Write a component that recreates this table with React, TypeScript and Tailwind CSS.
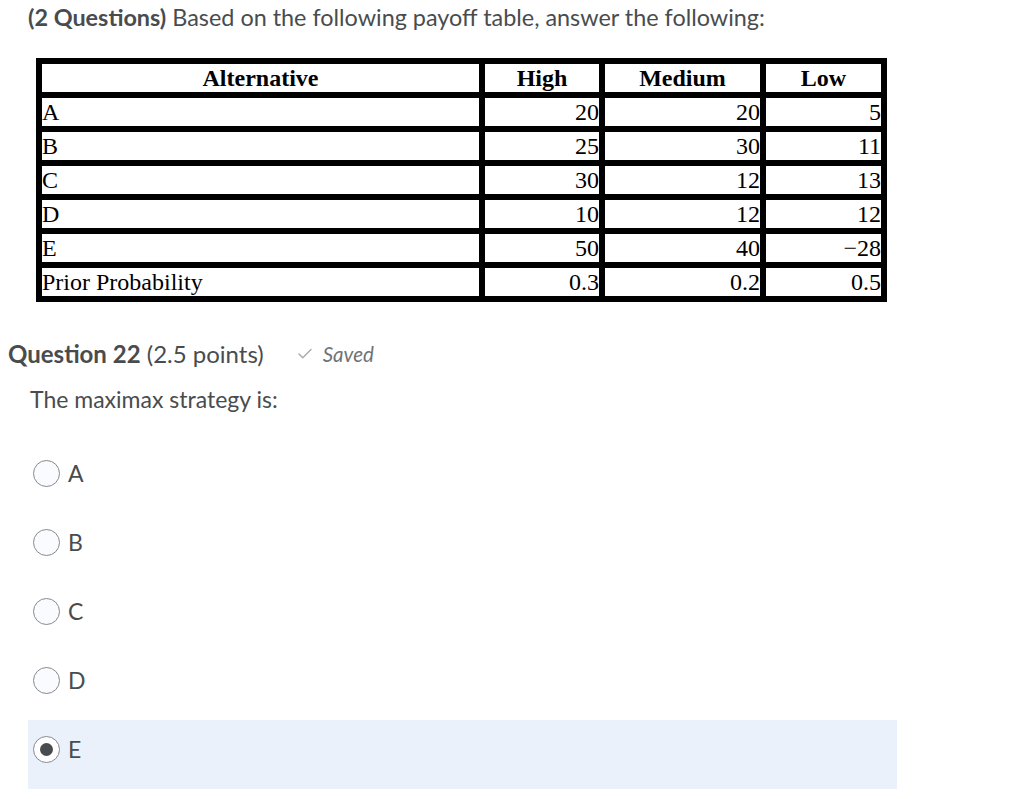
import React from 'react';
import { Check } from 'lucide-react';

const rows = [
  { label: 'A', high: '20', medium: '20', low: '5' },
  { label: 'B', high: '25', medium: '30', low: '11' },
  { label: 'C', high: '30', medium: '12', low: '13' },
  { label: 'D', high: '10', medium: '12', low: '12' },
  { label: 'E', high: '50', medium: '40', low: '\u221228' },
  { label: 'Prior Probability', high: '0.3', medium: '0.2', low: '0.5' },
];

const options = ['A', 'B', 'C', 'D', 'E'];

export default function App() {
  const selected = 'E';

  return (
    <div className="min-h-screen bg-white text-[#494c4e] font-['Lato',sans-serif]">
      {/* Intro */}
      <p className="pl-[28px] pt-[3px] text-[23.4px] leading-[28px]">
        <span className="font-bold">(2 Questions)</span> Based on the following payoff table, answer the following:
      </p>

      {/* Payoff table */}
      <table className="ml-[36px] mt-[27px] border-separate border-spacing-[6px] bg-black font-['Liberation_Serif',serif] text-[24px] leading-[27px] text-black">
        <thead>
          <tr>
            <th className="w-[437px] h-[28px] p-0 bg-white font-bold text-center align-bottom">Alternative</th>
            <th className="w-[114px] h-[28px] p-0 bg-white font-bold text-center align-bottom">High</th>
            <th className="w-[155px] h-[28px] p-0 bg-white font-bold text-center align-bottom">Medium</th>
            <th className="w-[115px] h-[28px] p-0 bg-white font-bold text-center align-bottom">Low</th>
          </tr>
        </thead>
        <tbody>
          {rows.map((r) => (
            <tr key={r.label}>
              <td className="h-[28px] p-0 bg-white text-left align-bottom">{r.label}</td>
              <td className="h-[28px] p-0 bg-white text-right align-bottom">{r.high}</td>
              <td className="h-[28px] p-0 bg-white text-right align-bottom">{r.medium}</td>
              <td className="h-[28px] p-0 bg-white text-right align-bottom">{r.low}</td>
            </tr>
          ))}
        </tbody>
      </table>

      {/* Question header */}
      <div className="mt-[38px] pl-[8px] flex items-center h-[28px]">
        <span className="text-[24px] leading-[28px]">
          <span className="font-bold">Question 22</span> (2.5 points)
        </span>
        <span className="ml-[32px] flex items-center gap-[9px] text-[#6e7376]">
          <Check size={18} strokeWidth={2} className="text-[#a8adb0]" />
          <span className="italic text-[20.5px]">Saved</span>
        </span>
      </div>

      <p className="mt-[17px] pl-[30px] text-[23px] leading-[28px]">The maximax strategy is:</p>

      {/* Options */}
      <div className="mt-[31px] flex flex-col">
        {options.map((o) => {
          const isSel = o === selected;
          return (
            <label
              key={o}
              className={`ml-[28px] w-[869px] h-[69px] flex items-start pt-[16px] pl-[5px] ${isSel ? 'bg-[#eaf1fb]' : ''}`}
            >
              <span
                className={`w-[27px] h-[27px] rounded-full border border-[#868a8d] flex items-center justify-center ${isSel ? 'bg-white' : 'bg-[#f9fbff]'}`}
              >
                {isSel && <span className="w-[13px] h-[13px] rounded-full bg-[#494c4e]" />}
              </span>
              <span className="ml-[8px] text-[23px] leading-[27px]">{o}</span>
            </label>
          );
        })}
      </div>
    </div>
  );
}
